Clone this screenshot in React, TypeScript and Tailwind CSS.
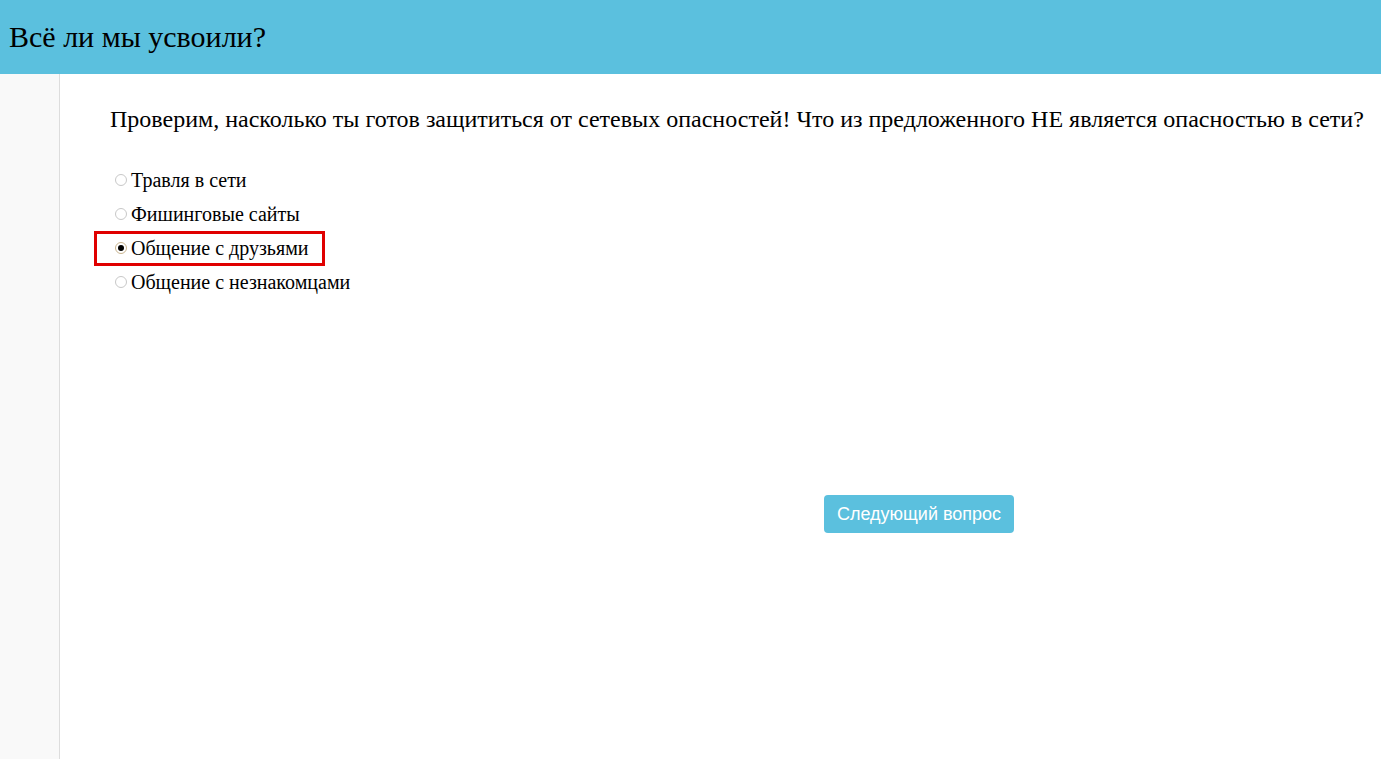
import React from "react";

const options = [
  "Травля в сети",
  "Фишинговые сайты",
  "Общение с друзьями",
  "Общение с незнакомцами",
];

export default function App() {
  const selected = 2;
  return (
    <div className="w-[1381px] h-[759px] flex flex-col bg-white overflow-hidden" style={{ fontFamily: '"Liberation Serif", "Times New Roman", serif' }}>
      <header className="h-[74px] shrink-0 bg-[#5bc0de] flex items-center pl-[9px]">
        <h1 className="text-[30px] text-black leading-none">Всё ли мы усвоили?</h1>
      </header>
      <div className="flex flex-1">
        <aside className="w-[60px] shrink-0 bg-[#f9f9f9] border-r border-[#dddddd]" />
        <main className="flex-1 flex flex-col">
          <p className="pl-[50px] pt-[31px] text-[24px] text-black leading-[28px] whitespace-nowrap">
            Проверим, насколько ты готов защититься от сетевых опасностей! Что из предложенного НЕ является опасностью в сети?
          </p>
          <div className="mt-[30px] flex flex-col pl-[34px]">
            {options.map((o, i) => (
              <div key={o} className="h-[34px] flex items-center">
                <div
                  className={
                    "h-[35px] flex items-center pl-[18px] pr-[13px] border-[3px] " +
                    (i === selected ? "border-[#e00000]" : "border-transparent")
                  }
                >
                  <span
                    className={
                      "w-[12px] h-[12px] rounded-full border flex items-center justify-center mr-[4px] " +
                      (i === selected ? "border-[#c9b48f] bg-white" : "border-[#c8c8c8] bg-white")
                    }
                  >
                    {i === selected && <span className="w-[6px] h-[6px] rounded-full bg-black" />}
                  </span>
                  <span className="text-[20px] text-black leading-none">{o}</span>
                </div>
              </div>
            ))}
          </div>
          <div className="mt-[196px] pl-[764px]">
            <button
              className="w-[190px] h-[38px] rounded-[4px] bg-[#5bc0de] text-white text-[18px]"
              style={{ fontFamily: '"Liberation Sans", Arial, sans-serif' }}
            >
              Следующий вопрос
            </button>
          </div>
        </main>
      </div>
    </div>
  );
}
